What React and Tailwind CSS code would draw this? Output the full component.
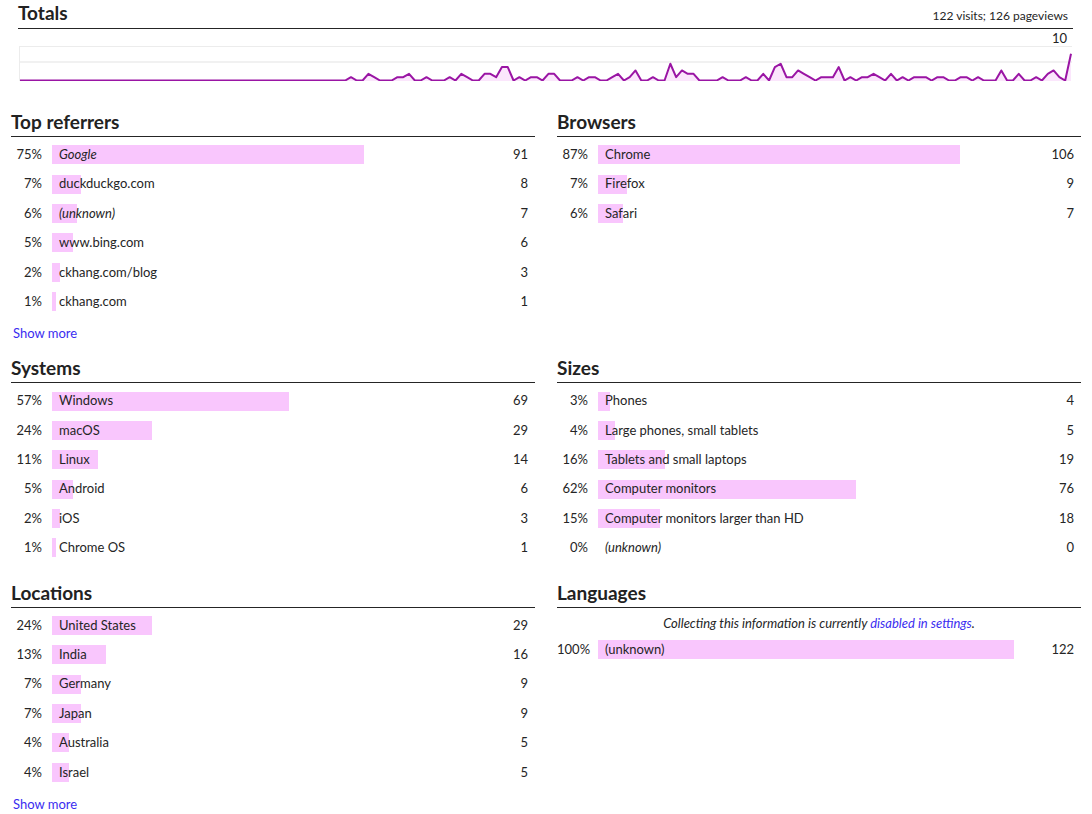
import React from "react";

const TOTAL_VALUES = (() => {
  const head = new Array(56).fill(0);
  const tail = [
    0,1,0,0,2,1,0,0,0,1,1,2,0,0,1,0,0,0,1,0,2,1,0,0,2,2,1,4,4,0,1,0,1,1,0,2,2,0,0,0,1,0,
    1,1,0,0,1,2,0,1,3,0,0,1,0,0,5,1,3,2,2,0,0,0,0,1,0,0,0,1,0,0,2,0,4,5,1,1,3,2,1,0,1,1,
    1,4,0,1,0,1,1,2,1,0,2,0,1,0,1,1,1,0,1,1,0,0,1,1,0,1,0,0,0,3,0,0,2,0,0,1,0,2,3,1,0,8,
  ];
  return head.concat(tail);
})();

function Chart() {
  const n = TOTAL_VALUES.length;
  const W = 1051;
  const step = 1050 / (n - 1);
  const pts = TOTAL_VALUES.map((v, i) => [i * step, 33.5 - v * 3.35]);
  const line = pts.map((p, i) => (i === 0 ? "M" : "L") + p[0].toFixed(2) + " " + p[1].toFixed(2)).join(" ");
  const area = line + ` L${(1050).toFixed(2)} 35 L0 35 Z`;
  return (
    <div className="relative mt-[17px] mx-[1px] h-[35px] border-t border-l border-[#ececec]">
      <svg className="block w-full h-full" viewBox={`0 0 ${W} 34`} preserveAspectRatio="none">
        <line x1="0" y1="15" x2={W} y2="15" stroke="#ececec" strokeWidth="1.5" />
        <path d={area} fill="#fbe6fc" />
        <path d={line} fill="none" stroke="#9a15a4" strokeWidth="2" strokeLinejoin="round" />
      </svg>
      <div className="absolute -top-[16px] right-[4px] bg-white px-[1px] text-[13px] leading-[15px] text-[#222]">10</div>
    </div>
  );
}

function Header({ title }) {
  return (
    <div className="border-b border-[#252525] pb-[2px]">
      <h2 className="text-[19px] leading-[25px] font-bold text-[#222]">{title}</h2>
    </div>
  );
}

function Row({ pct, name, count, italic }) {
  return (
    <div className="flex items-center h-[29.4px] text-[13px] text-[#252525]">
      <div className="w-[31px] text-right whitespace-nowrap">{pct}%</div>
      <div className="relative ml-[10px] w-[416px] h-[19px] flex items-center">
        <div className="absolute left-0 top-0 h-full bg-[#f9c6fd]" style={{ width: `${pct * 4.16}px` }} />
        <span className={"relative pl-[7px] whitespace-nowrap " + (italic ? "italic" : "")}>{name}</span>
      </div>
      <div className="flex-1 text-right pr-[7px]">{count}</div>
    </div>
  );
}

function Section({ title, rows, more, note }) {
  return (
    <div>
      <Header title={title} />
      <div className="pt-[3px]">
        {note && (
          <div className="h-[24px] pt-[2px] flex items-center justify-center text-[13px] italic text-[#252525]">
            <span>
              Collecting this information is currently{" "}
              <a className="text-[#3a2df0]">disabled in settings</a>.
            </span>
          </div>
        )}
        {rows.map((r, i) => (
          <Row key={i} pct={r[0]} name={r[1]} count={r[2]} italic={r[3]} />
        ))}
      </div>
      {more ? (
        <div className="mt-[7px] pl-[2px] text-[13px] leading-[20px] text-[#3a2df0]">
          <a>Show more</a>
        </div>
      ) : (
        <div className="h-[5px]" />
      )}
    </div>
  );
}

const referrers = [
  [75, "Google", 91, true],
  [7, "duckduckgo.com", 8],
  [6, "(unknown)", 7, true],
  [5, "www.bing.com", 6],
  [2, "ckhang.com/blog", 3],
  [1, "ckhang.com", 1],
];
const browsers = [
  [87, "Chrome", 106],
  [7, "Firefox", 9],
  [6, "Safari", 7],
];
const systems = [
  [57, "Windows", 69],
  [24, "macOS", 29],
  [11, "Linux", 14],
  [5, "Android", 6],
  [2, "iOS", 3],
  [1, "Chrome OS", 1],
];
const sizes = [
  [3, "Phones", 4],
  [4, "Large phones, small tablets", 5],
  [16, "Tablets and small laptops", 19],
  [62, "Computer monitors", 76],
  [15, "Computer monitors larger than HD", 18],
  [0, "(unknown)", 0, true],
];
const locations = [
  [24, "United States", 29],
  [13, "India", 16],
  [7, "Germany", 9],
  [7, "Japan", 9],
  [4, "Australia", 5],
  [4, "Israel", 5],
];
const languages = [[100, "(unknown)", 122]];

export default function App() {
  return (
    <div className="w-[1092px] h-[814px] overflow-hidden bg-white px-[11px] font-['Lato','Open_Sans',sans-serif] text-[#252525]">
      <div className="ml-[7px] mr-[8px]">
        <div className="flex items-baseline justify-between border-b border-[#252525] pb-[3px]">
          <h2 className="text-[19px] leading-[25px] font-bold text-[#222]">Totals</h2>
          <span className="text-[12px] mr-[5px] text-[#252525]">122 visits; 126 pageviews</span>
        </div>
        <Chart />
      </div>
      <div className="mt-[28px] grid grid-cols-2 gap-x-[22px] gap-y-[12px]">
        <Section title="Top referrers" rows={referrers} more />
        <Section title="Browsers" rows={browsers} />
        <Section title="Systems" rows={systems} />
        <Section title="Sizes" rows={sizes} />
        <Section title="Locations" rows={locations} more />
        <Section title="Languages" rows={languages} note />
      </div>
    </div>
  );
}
